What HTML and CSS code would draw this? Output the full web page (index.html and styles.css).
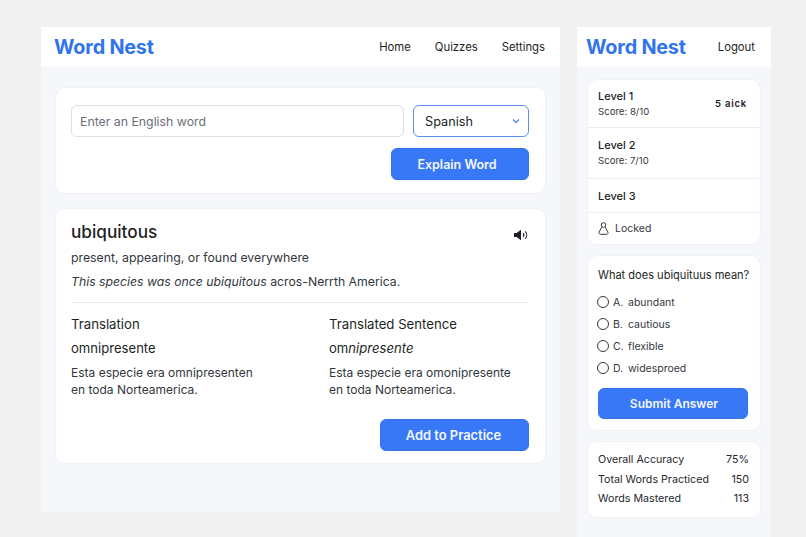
FILE: index.html
```html
<!DOCTYPE html>
<html lang="en">

<head>
    <meta charset="UTF-8">
    <meta name="viewport" content="width=device-width, initial-scale=1.0">
    <title>Word Nest</title>
    <link rel="stylesheet" href="styles.css">
</head>

<body>
    <div class="panel panel--main">
        <header class="topbar">
            <span class="logo">Word Nest</span>
            <nav class="topbar__nav">
                <a>Home</a>
                <a>Quizzes</a>
                <a>Settings</a>
            </nav>
        </header>
        <main class="panel__body panel__body--main">
            <section class="card search">
                <div class="search__row">
                    <div class="field field--input">Enter an English word</div>
                    <div class="field field--select">
                        <span>Spanish</span>
                        <svg width="8" height="6" viewBox="0 0 8 6" fill="none" stroke="#3b78f0" stroke-width="1.1">
                            <path d="M1 1.5 4 4.5 7 1.5" />
                        </svg>
                    </div>
                </div>
                <button class="btn btn--explain">Explain Word</button>
            </section>
            <section class="card word">
                <div class="word__head">
                    <h1 class="word__title">ubiquitous</h1>
                    <svg class="word__sound" width="15" height="12" viewBox="0 0 15 12">
                        <path d="M0 4h2.6L7 .8v10.4L2.6 8H0z" fill="#1c1f24" />
                        <path d="M9 4.2a2.6 2.6 0 0 1 0 3.6M11.2 2.4a5.2 5.2 0 0 1 0 7.2" fill="none" stroke="#1c1f24" stroke-width="1.1" />
                    </svg>
                </div>
                <p class="word__def">present, appearing, or found everywhere</p>
                <p class="word__example"><em>This species was once ubiquitous</em> acros-Nerrth America.</p>
                <div class="word__cols">
                    <div>
                        <h2 class="word__label">Translation</h2>
                        <p class="word__trans">omnipresente</p>
                        <p class="word__sentence">Esta especie era omnipresenten<br>en toda Norteamerica.</p>
                    </div>
                    <div>
                        <h2 class="word__label">Translated Sentence</h2>
                        <p class="word__trans">om<em>nipresente</em></p>
                        <p class="word__sentence">Esta especie era omonipresente<br>en toda Norteamerica.</p>
                    </div>
                </div>
                <button class="btn btn--add">Add to Practice</button>
            </section>
        </main>
    </div>

    <div class="panel panel--side">
        <header class="topbar topbar--side">
            <span class="logo">Word Nest</span>
            <a class="topbar__logout">Logout</a>
        </header>
        <div class="panel__body panel__body--side">
            <section class="card levels">
                <div class="level level--first">
                    <div>
                        <div class="level__name">Level 1</div>
                        <div class="level__score">Score: 8/10</div>
                    </div>
                    <span class="level__tag">5 aick</span>
                </div>
                <div class="level level--second">
                    <div>
                        <div class="level__name">Level 2</div>
                        <div class="level__score">Score: 7/10</div>
                    </div>
                </div>
                <div class="level level--third">
                    <div class="level__name">Level 3</div>
                </div>
                <div class="level level--locked">
                    <svg width="11" height="13" viewBox="0 0 11 13" fill="none" stroke="#33373d" stroke-width="1">
                        <circle cx="5.5" cy="3" r="2.3" />
                        <path d="M3.8 5.2 1.2 9.8c-.6 1.2.1 2.5 1.3 2.5h6c1.2 0 1.9-1.3 1.3-2.5L7.2 5.2" />
                    </svg>
                    <span>Locked</span>
                </div>
            </section>
            <section class="card quiz">
                <p class="quiz__question">What does ubiquituus mean?</p>
                <ul class="quiz__options">
                    <li><span class="radio"></span><span class="quiz__key">A.</span>abundant</li>
                    <li><span class="radio"></span><span class="quiz__key">B.</span>cautious</li>
                    <li><span class="radio"></span><span class="quiz__key">C.</span>flexible</li>
                    <li><span class="radio"></span><span class="quiz__key">D.</span>widesproed</li>
                </ul>
                <button class="btn btn--submit">Submit Answer</button>
            </section>
            <section class="card stats">
                <div class="stats__row"><span>Overall Accuracy</span><span>75%</span></div>
                <div class="stats__row"><span>Total Words Practiced</span><span>150</span></div>
                <div class="stats__row"><span>Words Mastered</span><span>113</span></div>
            </section>
        </div>
    </div>
</body>

</html>
```

FILE: styles.css
```css
* {
    box-sizing: border-box;
}

html,
body {
    height: 537px;
    overflow: hidden;
}

body {
    margin: 0;
    padding: 27px 0 0 41px;
    display: flex;
    align-items: flex-start;
    gap: 17px;
    background-color: #f1f1f1;
    font-family: Inter, "Liberation Sans", sans-serif;
    color: #1c1f24;
}

h1,
h2,
p,
ul {
    margin: 0;
    padding: 0;
}

.panel {
    background-color: #f5f7fb;
}

.panel--main {
    width: 519px;
    height: 485px;
}

.panel--side {
    width: 194px;
    height: 510px;
}

.topbar {
    height: 40px;
    padding: 0 15px 0 13px;
    display: flex;
    align-items: center;
    justify-content: space-between;
    background-color: #fff;
}

.topbar--side {
    padding: 0 16px 0 9px;
}

.logo {
    font-size: 19.8px;
    font-weight: 700;
    letter-spacing: -0.2px;
    color: #2f74ea;
}

.topbar__nav {
    display: flex;
    gap: 24px;
    font-size: 11.3px;
}

.topbar__logout {
    font-size: 11.3px;
}

.panel__body--main {
    padding: 20px 14px;
    display: flex;
    flex-direction: column;
    gap: 14px;
}

.panel__body--side {
    padding: 12px 10px;
    display: flex;
    flex-direction: column;
    gap: 10px;
}

.card {
    background-color: #fff;
    border: 1px solid #f0f2f6;
    border-radius: 10px;
}

.search {
    height: 107px;
    padding: 17px 16px 0 15px;
}

.search__row {
    display: flex;
    gap: 9px;
}

.field {
    height: 32px;
    display: flex;
    align-items: center;
    background-color: #fff;
    border-radius: 6px;
}

.field--input {
    flex: 1;
    padding-left: 8px;
    border: 1px solid #dcdfe4;
    font-size: 12.3px;
    color: #6b7078;
}

.field--select {
    width: 116px;
    padding: 0 8px 0 11px;
    justify-content: space-between;
    border: 1px solid #5a8dee;
    font-size: 12.7px;
}

.btn {
    display: block;
    height: 32px;
    border: 1px solid #3272ea;
    border-radius: 6px;
    background-color: #3878f6;
    color: #f3f7ff;
    font-family: inherit;
    font-size: 12.5px;
    font-weight: 600;
}

.btn--explain {
    width: 138px;
    margin: 11px 0 0 auto;
    padding: 0 6px 0 0;
}

.word {
    height: 256px;
    padding: 12px 16px 0 15px;
}

.word__head {
    display: flex;
    align-items: center;
    justify-content: space-between;
}

.word__title {
    font-size: 17.2px;
    font-weight: 500;
    line-height: 22px;
}

.word__sound {
    margin-top: 6px;
}

.word__def {
    margin-top: 6px;
    font-size: 12.3px;
    line-height: 18px;
    color: #33373d;
}

.word__example {
    margin-top: 6px;
    padding-bottom: 11px;
    border-bottom: 1px solid #e9ebee;
    font-size: 12.25px;
    line-height: 18px;
    color: #33373d;
}

.word__cols {
    margin-top: 12px;
    display: grid;
    grid-template-columns: 258px 1fr;
}

.word__label {
    font-size: 13.2px;
    font-weight: 400;
    line-height: 18px;
}

.word__trans {
    margin-top: 6px;
    font-size: 13.1px;
    line-height: 18px;
}

.word__sentence {
    margin-top: 8px;
    font-size: 12px;
    line-height: 16.5px;
    color: #33373d;
}

.btn--add {
    width: 149px;
    margin: 21px 0 0 auto;
    padding: 0 2px 0 0;
    font-size: 12.9px;
}

.level {
    display: flex;
    align-items: center;
    justify-content: space-between;
    padding: 0 13px 0 10px;
    border-bottom: 1px solid #eceef1;
}

.level--first {
    height: 48px;
}

.level--second {
    height: 51px;
}

.level--third {
    height: 34px;
}

.level--locked {
    height: 31px;
    justify-content: flex-start;
    gap: 6px;
    border-bottom: 0;
    font-size: 10.5px;
    color: #33373d;
}

.level__name {
    font-size: 11px;
    font-weight: 500;
    line-height: 16px;
}

.level__score {
    font-size: 9.6px;
    line-height: 16px;
    color: #33373d;
}

.level__tag {
    font-size: 9.5px;
    font-weight: 600;
    letter-spacing: 0.8px;
}

.quiz {
    height: 176px;
    padding: 11px 12px 0 10px;
}

.quiz__question {
    font-size: 11.06px;
    line-height: 16px;
    white-space: nowrap;
}

.quiz__options {
    margin-top: 8px;
    list-style: none;
}

.quiz__options li {
    height: 22px;
    display: flex;
    align-items: center;
    font-size: 10.5px;
    color: #33373d;
}

.radio {
    width: 12px;
    height: 12px;
    margin: 0 4px 0 -1px;
    border: 1px solid #33373d;
    border-radius: 50%;
}

.quiz__key {
    width: 15px;
}

.btn--submit {
    width: 100%;
    height: 31px;
    margin-top: 9px;
    padding: 0 0 0 2px;
    font-size: 12px;
}

.stats {
    height: 77px;
    padding: 8px 11px 0 10px;
}

.stats__row {
    display: flex;
    justify-content: space-between;
    font-size: 10.7px;
    line-height: 19.5px;
    color: #26292e;
}
```
